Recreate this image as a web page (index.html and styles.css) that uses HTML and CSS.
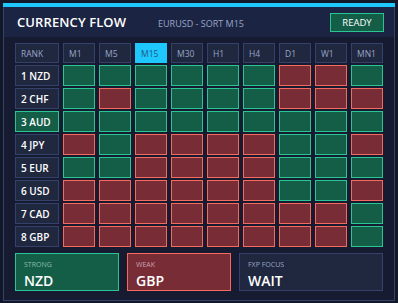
FILE: index.html
```html
<!DOCTYPE html>
<html lang="en">
<head>
    <meta charset="UTF-8">
    <title>Currency Flow</title>
    <link rel="stylesheet" href="styles.css">
</head>
<body>
    <div class="panel">
        <div class="panel-top"></div>
        <div class="panel-header">
            <h1>CURRENCY FLOW</h1>
            <span class="subtitle">EURUSD - SORT M15</span>
            <span class="status">READY</span>
        </div>

        <div class="panel-body">
            <div class="flow-grid" id="flowGrid">
                <div class="cell head">RANK</div>
                <div class="cell head">M1</div>
                <div class="cell head">M5</div>
                <div class="cell head active">M15</div>
                <div class="cell head">M30</div>
                <div class="cell head">H1</div>
                <div class="cell head">H4</div>
                <div class="cell head">D1</div>
                <div class="cell head">W1</div>
                <div class="cell head">MN1</div>
            </div>

            <div class="summary">
                <div class="card strong">
                    <div class="card-label">STRONG</div>
                    <div class="card-value">NZD</div>
                </div>
                <div class="card weak">
                    <div class="card-label">WEAK</div>
                    <div class="card-value">GBP</div>
                </div>
                <div class="card focus">
                    <div class="card-label">FXP FOCUS</div>
                    <div class="card-value">WAIT</div>
                </div>
            </div>
        </div>
    </div>

    <script>
        // g = strong, r = weak, per timeframe M1..MN1
        const rows = [
            { name: '1 NZD', cells: 'ggggggrrg' },
            { name: '2 CHF', cells: 'grggggrrr' },
            { name: '3 AUD', cells: 'ggggggggg', highlight: true },
            { name: '4 JPY', cells: 'rgrrrrggr' },
            { name: '5 EUR', cells: 'ggrrrrggg' },
            { name: '6 USD', cells: 'rrrrrrggr' },
            { name: '7 CAD', cells: 'rrrrrrrrg' },
            { name: '8 GBP', cells: 'rrrrrrrrg' }
        ];

        const grid = document.getElementById('flowGrid');

        rows.forEach(row => {
            const rank = document.createElement('div');
            rank.className = 'cell rank' + (row.highlight ? ' up' : '');
            rank.textContent = row.name;
            grid.appendChild(rank);

            row.cells.split('').forEach(c => {
                const cell = document.createElement('div');
                cell.className = 'cell ' + (c === 'g' ? 'up' : 'down');
                grid.appendChild(cell);
            });
        });
    </script>
</body>
</html>
```

FILE: styles.css
```css
:root {
    --page-bg: #131829;
    --panel-bg: #161b32;
    --header-bg: #1c2443;
    --line: #34426b;
    --cyan: #1ec8ff;
    --dark-cell: #1f283f;
    --green-bg: #145e48;
    --green-line: #2bc493;
    --red-bg: #782c35;
    --red-line: #f26b5c;
    --muted: #9aa6c8;
}

* {
    margin: 0;
    padding: 0;
    box-sizing: border-box;
}

body {
    font-family: 'Open Sans', 'Noto Sans', sans-serif;
    background-color: var(--page-bg);
    color: #ffffff;
    padding: 3px;
}

.panel {
    width: 392px;
    height: 298px;
    background-color: var(--panel-bg);
    border: 1px solid var(--line);
    border-top: none;
}

.panel-top {
    height: 4px;
    margin: 0 -1px;
    background-color: var(--cyan);
}

.panel-header {
    height: 30px;
    background-color: var(--header-bg);
    display: flex;
    align-items: center;
    padding: 0 10px 0 13px;
}

h1 {
    font-size: 13px;
    font-weight: 600;
    letter-spacing: 0.1px;
}

.subtitle {
    margin-left: 32px;
    font-size: 9px;
    color: var(--muted);
    margin-top: 2px;
}

.status {
    margin-left: auto;
    height: 19px;
    width: 54px;
    display: flex;
    align-items: center;
    justify-content: center;
    font-size: 9.5px;
    font-weight: 500;
    background-color: var(--green-bg);
    border: 1px solid var(--green-line);
}

.panel-body {
    padding: 6px 10px 0 11px;
}

.flow-grid {
    display: grid;
    grid-template-columns: 44px repeat(9, 32px);
    grid-template-rows: 20px repeat(8, 21px);
    column-gap: 4px;
    row-gap: 2px;
}

.cell {
    border: 1px solid var(--line);
    background-color: var(--dark-cell);
    display: flex;
    align-items: center;
    padding-left: 5px;
}

.cell.head {
    font-size: 8.5px;
    color: var(--muted);
    margin-bottom: 2px;
    height: 20px;
}

.cell.head.active {
    background-color: var(--cyan);
    border-color: var(--cyan);
    color: #1d5a7c;
}

.cell.rank {
    font-size: 10px;
    font-weight: 600;
}

.cell.up {
    background-color: var(--green-bg);
    border-color: var(--green-line);
}

.cell.down {
    background-color: var(--red-bg);
    border-color: var(--red-line);
}

.summary {
    display: flex;
    gap: 8px;
    margin-top: 6px;
}

.card {
    height: 38px;
    padding: 6px 8px 0;
    border: 1px solid var(--line);
    background-color: var(--dark-cell);
}

.card.strong {
    width: 104px;
    background-color: var(--green-bg);
    border-color: var(--green-line);
}

.card.weak {
    width: 104px;
    background-color: var(--red-bg);
    border-color: var(--red-line);
}

.card.focus {
    width: 144px;
}

.card-label {
    font-size: 7px;
    color: var(--muted);
    line-height: 10px;
}

.strong .card-label {
    color: #8dbba9;
}

.weak .card-label {
    color: #c9a0b4;
}

.card-value {
    font-size: 14px;
    font-weight: 600;
    line-height: 18px;
    margin-top: 2px;
}
```
